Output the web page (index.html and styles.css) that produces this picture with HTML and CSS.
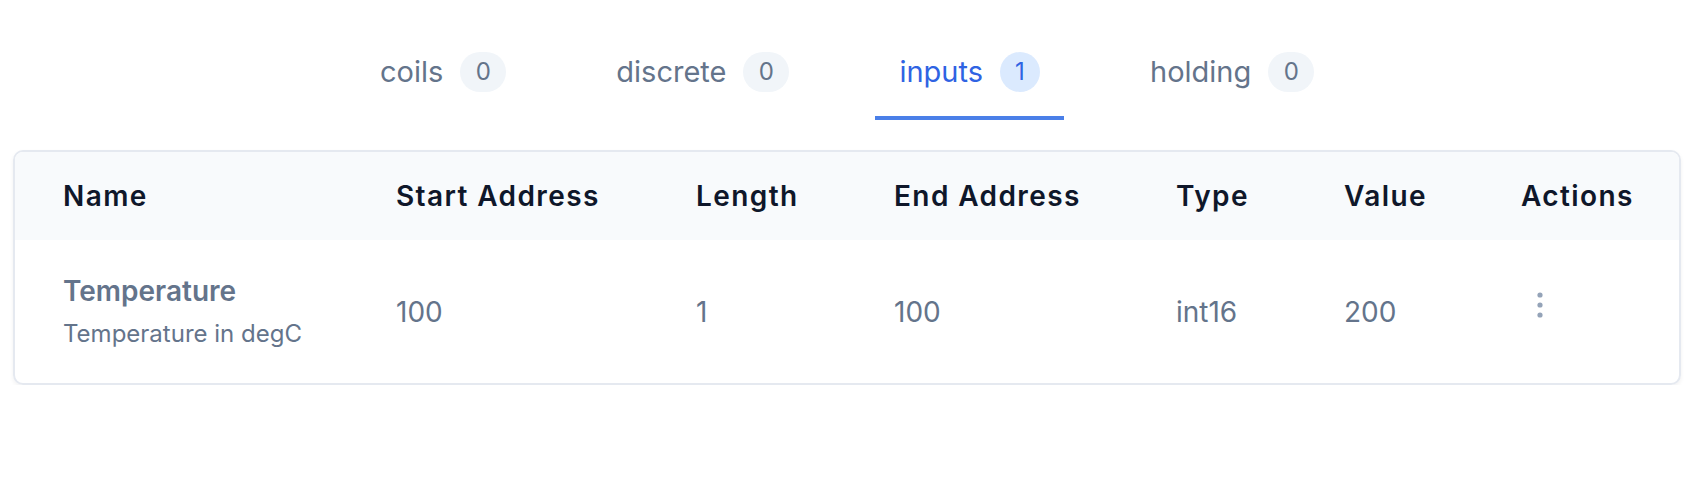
FILE: index.html
```html
<!DOCTYPE html>
<html>
<head>
<meta charset="utf-8">
<link rel="stylesheet" href="styles.css">
</head>
<body>
<div class="page">
  <nav class="tabs">
    <a class="tab"><span class="tab-label">coils</span><span class="badge">0</span></a>
    <a class="tab"><span class="tab-label">discrete</span><span class="badge">0</span></a>
    <a class="tab active"><span class="tab-label">inputs</span><span class="badge">1</span></a>
    <a class="tab"><span class="tab-label">holding</span><span class="badge">0</span></a>
  </nav>
  <div class="card">
    <table class="grid">
      <colgroup>
        <col class="c-name"><col class="c-start"><col class="c-len"><col class="c-end"><col class="c-type"><col class="c-val"><col class="c-act">
      </colgroup>
      <thead>
        <tr>
          <th>Name</th><th>Start Address</th><th>Length</th><th>End Address</th><th>Type</th><th>Value</th><th>Actions</th>
        </tr>
      </thead>
      <tbody>
        <tr>
          <td>
            <div class="name">Temperature</div>
            <div class="desc">Temperature in degC</div>
          </td>
          <td>100</td>
          <td>1</td>
          <td>100</td>
          <td>int16</td>
          <td>200</td>
          <td>
            <button class="kebab" aria-label="Actions">
              <svg width="10" height="30" viewBox="0 0 10 30"><circle cx="5" cy="5" r="2.6" fill="#94a3b8"/><circle cx="5" cy="15" r="2.6" fill="#94a3b8"/><circle cx="5" cy="25" r="2.6" fill="#94a3b8"/></svg>
            </button>
          </td>
        </tr>
      </tbody>
    </table>
  </div>
</div>
</body>
</html>
```

FILE: styles.css
```css
html, body {
  margin: 0;
  padding: 0;
  background: #ffffff;
}
body {
  font-family: Inter, "Noto Sans", "Liberation Sans", sans-serif;
  color: #0f172a;
}
.page {
  padding: 0 21px 0 13px;
}
.tabs {
  display: flex;
  align-items: stretch;
  gap: 62px;
  padding-left: 343px;
  padding-top: 52px;
  height: 68px;
}
.tab {
  display: flex;
  align-items: flex-start;
  gap: 17px;
  padding: 0 24px;
  color: #64748b;
  font-size: 29px;
  line-height: 40px;
  border-bottom: 4px solid transparent;
  cursor: pointer;
}
.tab.active {
  color: #2f63e3;
  border-bottom-color: #4a7fe8;
}
.badge {
  display: inline-flex;
  align-items: center;
  justify-content: center;
  height: 40px;
  min-width: 46px;
  box-sizing: border-box;
  padding: 0 14px;
  border-radius: 20px;
  background: #f1f5f9;
  color: #64748b;
  font-size: 24px;
}
.tab.active .badge {
  background: #dbeafe;
  color: #2f63e3;
  min-width: 40px;
}
.card {
  margin-top: 30px;
  border: 2px solid #e5e9f0;
  border-radius: 10px;
  overflow: hidden;
  box-shadow: 0 2px 4px rgba(15, 23, 42, 0.06);
}
.grid {
  width: 100%;
  border-collapse: collapse;
  table-layout: fixed;
}
.c-name { width: 333px; }
.c-start { width: 300px; }
.c-len { width: 198px; }
.c-end { width: 282px; }
.c-type { width: 168px; }
.c-val { width: 177px; }
.c-act { width: auto; }
th {
  background: #f8fafc;
  text-align: left;
  font-size: 28px;
  font-weight: 600;
  letter-spacing: 0.05em;
  color: #0f172a;
  height: 88px;
  padding: 0 0 0 48px;
  box-sizing: border-box;
}
td {
  height: 143px;
  padding: 0 0 0 48px;
  font-size: 28px;
  color: #64748b;
  vertical-align: middle;
}
.name {
  font-weight: 600;
  font-size: 28px;
  line-height: 36px;
  color: #64748b;
}
.desc {
  font-size: 24px;
  line-height: 34px;
  color: #64748b;
  margin-top: 8px;
}
.kebab {
  border: 0;
  background: transparent;
  padding: 0;
  margin-left: 14px;
  display: block;
  margin-top: -14px;
  cursor: pointer;
}
.kebab svg { display: block; }
```
